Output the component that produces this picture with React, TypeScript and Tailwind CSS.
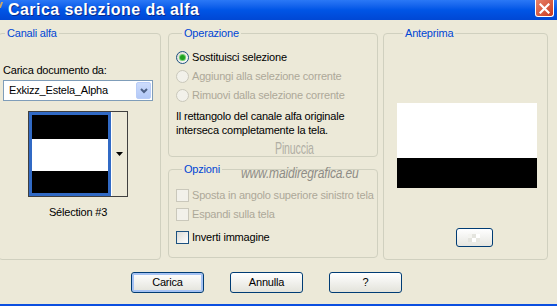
import React from 'react'

const groupBox = 'border border-[#d0d0bf] rounded-[4px] m-0'
const legendCls = 'ml-[6px] px-[2px] text-[#0046d5] leading-[13px]'

function Radio({ checked, disabled }: { checked?: boolean; disabled?: boolean }) {
  return (
    <span
      className={
        disabled
          ? 'w-[13px] h-[13px] rounded-full border border-[#cac8bb] bg-[#f2f1ea] flex items-center justify-center shrink-0'
          : 'w-[13px] h-[13px] rounded-full border border-[#1c5180] bg-gradient-to-br from-[#dcd9cf] to-white flex items-center justify-center shrink-0'
      }
    >
      {checked && <span className="w-[5px] h-[5px] rounded-full bg-[#21a121] shadow-[0_0_0_1px_#6fcf6f]" />}
    </span>
  )
}

function Check({ disabled }: { disabled?: boolean }) {
  return (
    <span
      className={
        disabled
          ? 'w-[13px] h-[13px] border border-[#cac8bb] bg-[#f2f1ea] shrink-0'
          : 'w-[13px] h-[13px] border border-[#1c5180] bg-gradient-to-br from-[#dcdcd7] to-white shrink-0'
      }
    />
  )
}

function XpButton({ label, isDefault }: { label: string; isDefault?: boolean }) {
  return (
    <button
      className={
        isDefault
          ? 'w-[73px] h-[21px] border border-[#003c74] rounded-[3px] bg-gradient-to-b from-white to-[#e3e3db] shadow-[inset_0_0_0_2px_#a5c2f3] text-black leading-[19px]'
          : 'w-[73px] h-[21px] border border-[#003c74] rounded-[3px] bg-gradient-to-b from-white to-[#e3e3db] text-black leading-[19px]'
      }
    >
      {label}
    </button>
  )
}

export default function App() {
  return (
    <div className="relative w-[557px] h-[306px] bg-[#ece9d8] flex flex-col overflow-hidden font-['Liberation_Sans',Arial,sans-serif] text-[11px] tracking-[-0.2px] whitespace-nowrap text-black">
      {/* title bar */}
      <div className="h-[20px] shrink-0 flex items-center bg-gradient-to-b from-[#2a78f6] via-[#0055e6] to-[#0047d4] relative">
        <span className="absolute left-0 top-[2px] w-[2px] h-[6px] bg-[#c9a66b] -skew-x-[20deg]" />
        <h1 className="ml-[8px] text-white font-bold text-[16px] tracking-[0.45px] leading-[18px] [text-shadow:1px_1px_0_#0a2a8a]">
          Carica selezione da alfa
        </h1>
        <div className="ml-auto mr-[3px] self-start w-[19px] h-[17px] border border-white border-t-0 rounded-b-[3px] bg-gradient-to-br from-[#e8826a] to-[#c7361b] flex items-center justify-center">
          <svg width="11" height="11" viewBox="0 0 11 11">
            <path d="M1.5 1.5 L9.5 9.5 M9.5 1.5 L1.5 9.5" stroke="white" strokeWidth="2.2" strokeLinecap="square" />
          </svg>
        </div>
      </div>

      {/* groups */}
      <div className="flex items-start pt-[7px]">
        {/* Canali alfa */}
        <fieldset className={`${groupBox} ml-[-2px] w-[163px] h-[233px] pl-[4px]`}>
          <legend className="ml-[2px] px-[2px] text-[#0046d5] leading-[13px]">Canali alfa</legend>
          <div className="mt-[24px] leading-[13px]">Carica documento da:</div>
          <div className="mt-[3px] w-[150px] h-[21px] border border-[#7f9db9] bg-white flex items-center">
            <span className="pl-[5px] flex-1">Exkizz_Estela_Alpha</span>
            <span className="w-[15px] h-[17px] mr-[1px] rounded-[2px] bg-gradient-to-b from-[#cddcfc] to-[#b3c9f7] border border-[#b9cdf8] flex items-center justify-center">
              <svg width="8" height="6" viewBox="0 0 8 6">
                <path d="M1 1 L4 4 L7 1" fill="none" stroke="#4d6185" strokeWidth="2" />
              </svg>
            </span>
          </div>
          <div className="w-[150px] flex justify-center mt-[10px]">
            <div className="w-[100px] h-[86px] border border-[#404040] flex">
              <div className="w-[82px] h-full border-[3px] border-[#316ac5] flex flex-col">
                <div className="h-[24px] bg-black" />
                <div className="h-[32px] bg-white" />
                <div className="flex-1 bg-black" />
              </div>
              <div className="flex-1 border-l border-white bg-[#ece9d8] flex items-center justify-center">
                <svg width="7" height="4" viewBox="0 0 7 4">
                  <path d="M0 0 H7 L3.5 4 Z" fill="black" />
                </svg>
              </div>
            </div>
          </div>
          <div className="w-[150px] text-center mt-[9px] leading-[13px]">Sélection #3</div>
        </fieldset>

        {/* middle column */}
        <div className="ml-[7px] w-[210px] flex flex-col">
          <fieldset className={`${groupBox} h-[130px] pl-[7px]`}>
            <legend className={legendCls}>Operazione</legend>
            <div className="mt-[8px] flex flex-col">
              <div className="h-[19px] flex items-center gap-[3px]">
                <Radio checked />
                <span>Sostituisci selezione</span>
              </div>
              <div className="h-[19px] flex items-center gap-[3px] text-[#aca899]">
                <Radio disabled />
                <span>Aggiungi alla selezione corrente</span>
              </div>
              <div className="h-[19px] flex items-center gap-[3px] text-[#aca899]">
                <Radio disabled />
                <span>Rimuovi dalla selezione corrente</span>
              </div>
            </div>
            <div className="mt-[4px] leading-[14px]">
              Il rettangolo del canale alfa originale
              <br />
              interseca completamente la tela.
            </div>
          </fieldset>

          <fieldset className={`${groupBox} mt-[6px] h-[95px] pl-[7px]`}>
            <legend className={legendCls}>Opzioni</legend>
            <div className="mt-[10px] flex flex-col">
              <div className="h-[19px] flex items-center gap-[3px] text-[#aca899]">
                <Check disabled />
                <span>Sposta in angolo superiore sinistro tela</span>
              </div>
              <div className="h-[19px] flex items-center gap-[3px] text-[#aca899]">
                <Check disabled />
                <span>Espandi sulla tela</span>
              </div>
              <div className="mt-[4px] h-[19px] flex items-center gap-[3px]">
                <Check />
                <span>Inverti immagine</span>
              </div>
            </div>
          </fieldset>
        </div>

        {/* Anteprima */}
        <fieldset className={`${groupBox} ml-[5px] w-[165px] h-[233px] pl-[13px]`}>
          <legend className={legendCls}>Anteprima</legend>
          <div className="mt-[63px] w-[140px] flex flex-col">
            <div className="h-[55px] bg-white" />
            <div className="h-[30px] bg-black" />
          </div>
          <div className="mt-[40px] ml-[59px] w-[37px] h-[19px] border border-[#003c74] rounded-[3px] bg-gradient-to-b from-white to-[#e6e6e0] flex items-center justify-center">
            <svg width="14" height="8" viewBox="0 0 14 8">
              <rect x="0" y="0" width="4" height="4" fill="#f4f4f0" />
              <rect x="4" y="4" width="4" height="4" fill="#ffffff" />
              <rect x="8" y="0" width="4" height="4" fill="#ffffff" />
              <rect x="4" y="0" width="4" height="4" fill="#e4e4de" />
              <rect x="0" y="4" width="4" height="4" fill="#e4e4de" />
              <rect x="8" y="4" width="4" height="4" fill="#e8e8e2" />
            </svg>
          </div>
        </fieldset>
      </div>

      {/* buttons */}
      <div className="mt-[12px] pl-[131px] flex gap-[26px]">
        <XpButton label="Carica" isDefault />
        <XpButton label="Annulla" />
        <XpButton label="?" />
      </div>

      <div className="mt-auto h-[2px] bg-[#0b4fe0]" />

      {/* watermark */}
      <span className="absolute left-[275px] top-[140px] text-[17px] leading-[18px] text-[#b0aea4] scale-x-[0.62] origin-left">
        Pinuccia
      </span>
      <span className="absolute left-[241px] top-[165px] text-[14px] leading-[16px] italic text-[#8e8c86] scale-x-[0.86] origin-left">
        www.maidiregrafica.eu
      </span>
    </div>
  )
}
